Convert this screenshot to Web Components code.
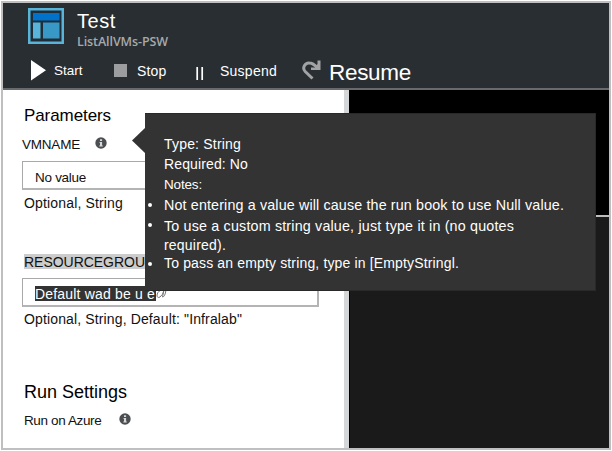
<!DOCTYPE html>
<html lang="en"><head><meta charset="utf-8"><title>Test</title>
<style>html,body{margin:0;background:#fff;overflow:hidden}body{font-family:"Liberation Sans",Arial,sans-serif}</style></head>
<body><test-blade></test-blade>
<script>
const define=(name,html,init)=>customElements.define(name,class extends HTMLElement{
  connectedCallback(){ if(this.shadowRoot)return; const t=document.createElement('template');t.innerHTML=html;
    this.attachShadow({mode:'open'}).append(t.content.cloneNode(true)); if(init)init.call(this,this.shadowRoot);}
});
// One line of text; "w" is the advance width in px that letter-spacing fits it to.
define('ui-text',`<style>:host{display:block;height:20px;line-height:20px;white-space:pre;font-size:13px;flex:none}span{display:inline-block;vertical-align:top}</style><span><slot></slot></span>`,function(r){
  const s=this.getAttribute('size'),w=+this.getAttribute('w'); if(s)this.style.fontSize=s+'px';
  if(w){const n=this.textContent.length,c=document.createElement('canvas').getContext('2d'),f=getComputedStyle(this);
    c.font=`${f.fontWeight} ${f.fontSize} ${f.fontFamily}`;
    this.style.letterSpacing=((w-c.measureText(this.textContent).width)/n)+'px';}
});
define('info-icon',`<style>:host{display:block;width:12px;height:12px;flex:none}svg{display:block}</style>
<svg width="12" height="12" viewBox="0 0 12 12"><circle cx="6" cy="6" r="5.7" fill="#4c4f52"/><path d="M5 2.3h2.1v1.6H5zM4.4 4.9h2.7v3.6h.7v1H4.3v-1H5V5.8h-.6z" fill="#d8d8d8"/></svg>`);
define('field-box',`<style>:host{display:flex;box-sizing:border-box;width:297px;height:29px;border-style:solid;border-width:1px 2px 2px 1px;border-color:#a9a9a9 #b4b4b4 #b4b4b4 #a9a9a9;padding-left:12px;background:#fff}</style><slot></slot>`);
define('tool-bar',`<style>
:host{display:flex;height:34px;align-items:flex-start;color:#fff}
svg{display:block;flex:none}.st{margin:6px 0 0 7px;width:29px}.sp{margin:6px 0 0 10px;width:29px}.su{margin:6px 0 0 16px;width:57px}.re{margin:8px 0 0 7px}
</style>
<svg style="margin:5px 0 0 28px" width="16" height="21"><path d="M0 0L15 10.300L0 20.500Z" fill="#fff"/></svg><ui-text class="st" size="13.500" w="28.500">Start</ui-text>
<svg style="margin:9px 0 0 31px" width="13" height="13"><path d="M0 0h13v13H0z" fill="#9b9d9e"/></svg><ui-text class="sp" size="14" w="29.500">Stop</ui-text>
<svg style="margin:12px 0 0 30px" width="9" height="13"><path d="M1.200 0V13M6.200 0V13" stroke="#fff" stroke-width="1.700"/></svg><ui-text class="su" style="margin-left:15px" size="14" w="57">Suspend</ui-text>
<svg style="margin:5px 0 0 25px" width="20" height="21" viewBox="0 0 20 21"><path d="M10.500 18.500L3.200 11.500C-.2 8 3 2.500 7.500 3Q11 3 15.500 8" fill="none" stroke="#a1a3a4" stroke-width="3"/><path d="M18.500 .5V10H9V7.500H13L15.500 4V.5Z" fill="#a1a3a4"/></svg>
<ui-text class="re" size="22.500" w="82">Resume</ui-text>`);
define('blade-header',`<style>
:host{display:block;box-sizing:border-box;height:87px;background:#292e32;border-bottom:2px solid #686a6b;color:#fff}
.title{display:flex;height:52px}.logo{display:block;margin:5px 0 0 25px;flex:none}
.names{margin:8px 0 0 13px}.sub{font-family:"Open Sans","Noto Sans",sans-serif;font-weight:600;color:#a7a9aa;margin-top:1px}
</style><div class="title"><svg class="logo" width="36" height="36"><path d="M0 0h36v36H0z" fill="#59b4d9"/><path d="M2.500 2.500h31v31h-31z" fill="#202d36"/><path d="M5 5h26.500v7.500H5z" fill="#0072ca"/><path d="M5 14.500h7.500v16H5z" fill="#59b4d9"/><path d="M15 14.500h16.500v16H15z" fill="#3999c6"/></svg>
<div class="names"><ui-text size="20" w="39">Test</ui-text><ui-text class="sub" size="12.500" w="91">ListAllVMs-PSW</ui-text></div></div><tool-bar></tool-bar>`);
define('params-pane',`<style>
:host{display:block;box-sizing:border-box;width:341px;padding:16px 0 0 19px;color:#111;background:#fff}
.row{display:flex;margin-left:0}.ind{margin-left:2px}
.hl{background:#ccc;height:15px;line-height:16px;width:122px;margin:39px 0 0 2px}
.sel{background:#333;color:#fff;height:15px;line-height:16px;width:121px;margin-top:7px}
</style>
<ui-text class="ind" size="17" w="87" style="color:#000">Parameters</ui-text>
<div class="row" style="margin-top:9px"><ui-text size="13.500" w="58">VMNAME</ui-text><info-icon style="margin:2px 0 0 15px"></info-icon></div>
<field-box style="margin-top:6px"><ui-text size="13.500" w="51" style="margin-top:6px">No value</ui-text></field-box>
<ui-text class="ind" style="margin-top:3px" size="14" w="99">Optional, String</ui-text>
<ui-text class="hl" style="margin-top:41px" size="14" w="121">RESOURCEGROU</ui-text>
<field-box style="margin-top:9px"><ui-text class="sel" size="14" w="120">Default wad be u e</ui-text><svg style="margin-top:10px" width="11" height="11"><path d="M7 1Q2 1 1 6Q1 9.500 4 8Q7 6 8 1L6.500 8Q9 8 10 1" fill="none" stroke="#777"/></svg></field-box>
<ui-text class="ind" style="margin-top:2px" size="14" w="218">Optional, String, Default: "Infralab"</ui-text>
<ui-text class="ind" style="margin-top:53px;color:#000" size="18" w="103">Run Settings</ui-text>
<div class="row ind" style="margin-top:9px"><ui-text size="13.500" w="78">Run on Azure</ui-text><info-icon style="margin:2px 0 0 18px"></info-icon></div>`);
define('output-pane',`<style>:host{display:flex;flex-direction:column;flex:1;border-left:5px solid #d4d6d7}
.top{height:125px;background:#000}.rule{height:2px;background:#bdbdbd}.bottom{flex:1;background:#1a1a1a;border-left:1px solid #000}</style>
<div class="top"></div><div class="rule"></div><div class="bottom"></div>`);
define('help-tip',`<style>
:host{position:absolute;left:132px;top:113px;width:464px;height:178px;display:flex;color:#fff}
.arrow{width:13px;margin-top:15px;flex:none}.box{box-sizing:border-box;width:451px;height:178px;background:#333;border:1px solid #292929;border-left:0;padding:20px 0 0 19px}
.item{display:flex;margin-left:-16px}.item i{width:4px;height:4px;border-radius:2px;background:#fff;margin:8px 12px 0 0;flex:none}
</style><svg class="arrow" width="13" height="26"><path d="M0 12.500L13 0V25Z" fill="#333"/></svg>
<div class="box"><ui-text size="14" w="77">Type: String</ui-text><ui-text size="14" w="84">Required: No</ui-text><ui-text style="margin-top:1px" size="13.500" w="38">Notes:</ui-text>
<div class="item"><i></i><ui-text size="14.300" w="400">Not entering a value will cause the run book to use Null value.</ui-text></div>
<div class="item" style="margin-top:1px"><i style="margin-top:7px"></i><ui-text size="14.300" w="350">To use a custom string value, just type it in (no quotes</ui-text></div>
<ui-text style="margin-top:-1px" size="14" w="62">required).</ui-text>
<div class="item" style="margin-top:-2px"><i style="margin-top:9px"></i><ui-text size="14" w="295">To pass an empty string, type in [EmptyStringl.</ui-text></div></div>`);
define('test-blade',`<style>
:host{display:block;box-sizing:border-box;width:612px;height:451px;padding:1px;position:relative}
.frame{box-sizing:border-box;width:610px;height:449px;border:2px solid #bfbfbf}
.main{display:flex;height:358px}
</style><div class="frame"><blade-header></blade-header><div class="main"><params-pane></params-pane><output-pane></output-pane></div></div><help-tip></help-tip>`);
</script></body></html>
